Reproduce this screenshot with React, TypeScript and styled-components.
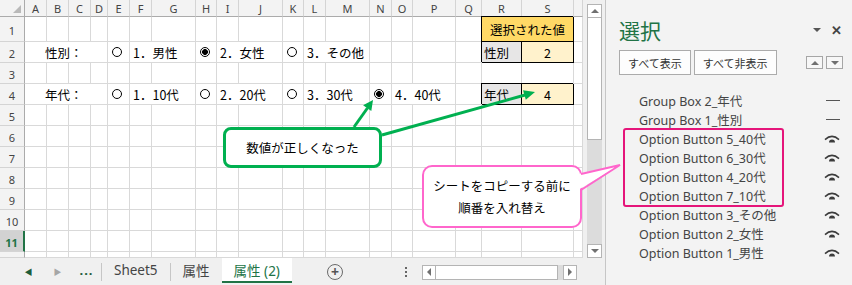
import styled, { createGlobalStyle } from 'styled-components';

const GlobalStyle = createGlobalStyle`
  html, body {
    margin: 0;
    padding: 0;
  }
  body {
    background: #fff;
    font-family: "Noto Sans", "Noto Sans CJK JP", sans-serif;
  }
`;

const JP = `"Noto Sans CJK JP", "Noto Sans", sans-serif`;
const UI = `"Noto Sans", "Noto Sans CJK JP", sans-serif`;
const GREEN = '#217346';
const GRID = '#d9d9d9';

// column widths A..S, T is the partial column left over
const COL_WIDTHS = [22, 22, 22, 17, 22, 22, 44, 21, 22, 44, 21, 22, 44, 22, 21, 43, 26, 40, 52];
const LETTERS = 'ABCDEFGHIJKLMNOPQRS'.split('');

type Seg = {
  col: number;
  span?: number;
  kind: 'label' | 'radio' | 'option' | 'title' | 'key' | 'val';
  text?: string;
  on?: boolean;
};

const SHEET: Seg[][] = [
  [{ col: 17, span: 2, kind: 'title', text: '選択された値' }],
  [
    { col: 0, span: 4, kind: 'label', text: '性別：' },
    { col: 4, kind: 'radio' },
    { col: 5, span: 2, kind: 'option', text: '1．男性' },
    { col: 7, kind: 'radio', on: true },
    { col: 8, span: 2, kind: 'option', text: '2．女性' },
    { col: 10, kind: 'radio' },
    { col: 11, span: 2, kind: 'option', text: '3．その他' },
    { col: 17, kind: 'key', text: '性別' },
    { col: 18, kind: 'val', text: '2' },
  ],
  [],
  [
    { col: 0, span: 4, kind: 'label', text: '年代：' },
    { col: 4, kind: 'radio' },
    { col: 5, span: 2, kind: 'option', text: '1．10代' },
    { col: 7, kind: 'radio' },
    { col: 8, span: 2, kind: 'option', text: '2．20代' },
    { col: 10, kind: 'radio' },
    { col: 11, span: 2, kind: 'option', text: '3．30代' },
    { col: 13, kind: 'radio', on: true },
    { col: 14, span: 2, kind: 'option', text: '4．40代' },
    { col: 17, kind: 'key', text: '年代' },
    { col: 18, kind: 'val', text: '4' },
  ],
  [],
  [],
  [],
  [],
  [],
  [],
  [],
  [],
];

const ITEMS = [
  { name: 'Group Box 2_年代', group: true },
  { name: 'Group Box 1_性別', group: true },
  { name: 'Option Button 5_40代' },
  { name: 'Option Button 6_30代' },
  { name: 'Option Button 4_20代' },
  { name: 'Option Button 7_10代' },
  { name: 'Option Button 3_その他' },
  { name: 'Option Button 2_女性' },
  { name: 'Option Button 1_男性' },
];

const Screen = styled.div`
  position: relative;
  width: 852px;
  height: 285px;
  display: flex;
  overflow: hidden;
  background: #f0f0f0;
`;

const SheetSide = styled.div`
  width: 605px;
  display: flex;
  flex-direction: column;
`;

const SheetTop = styled.div`
  height: 258px;
  display: flex;
`;

const Grid = styled.div`
  width: 583px;
  height: 258px;
  overflow: hidden;
  display: grid;
  grid-template-columns: 25px ${COL_WIDTHS.map((w) => `${w}px`).join(' ')} 1fr;
  grid-template-rows: 17px 25px repeat(10, 21px) 1fr;
  background: #fff;
`;

const Corner = styled.div`
  box-sizing: border-box;
  background: #f3f3f3;
  border-right: 1px solid #ababab;
  border-bottom: 1px solid #ababab;
  display: flex;
  justify-content: flex-end;
  align-items: flex-end;
  padding: 0 3px 3px 0;
  &::after {
    content: '';
    border-style: solid;
    border-width: 0 0 8px 8px;
    border-color: transparent transparent #b9b9b9 transparent;
  }
`;

const ColHead = styled.div`
  box-sizing: border-box;
  background: #f3f3f3;
  border-right: 1px solid #d4d4d4;
  border-bottom: 1px solid #ababab;
  display: flex;
  align-items: center;
  justify-content: center;
  font-family: ${UI};
  font-size: 11px;
  color: #444;
`;

const RowHead = styled.div<{ $active?: boolean }>`
  box-sizing: border-box;
  background: ${(p) => (p.$active ? '#d2d2d2' : '#f3f3f3')};
  border-right: ${(p) => (p.$active ? `2px solid ${GREEN}` : '1px solid #ababab')};
  border-bottom: 1px solid #d4d4d4;
  display: flex;
  align-items: center;
  justify-content: center;
  font-family: ${UI};
  font-size: 11px;
  font-weight: ${(p) => (p.$active ? 700 : 400)};
  color: ${(p) => (p.$active ? GREEN : '#444')};
  padding-top: 2px;
`;

const Cell = styled.div<{
  $span?: number;
  $fill?: string;
  $boxed?: boolean;
  $center?: boolean;
  $pad?: number;
}>`
  grid-column: span ${(p) => p.$span || 1};
  box-sizing: border-box;
  min-width: 0;
  border-right: 1px solid ${(p) => (p.$boxed ? '#000' : GRID)};
  border-bottom: 1px solid ${(p) => (p.$boxed ? '#000' : GRID)};
  background: ${(p) => p.$fill || '#fff'};
  display: flex;
  align-items: center;
  justify-content: ${(p) => (p.$center ? 'center' : 'flex-start')};
  padding-left: ${(p) => p.$pad ?? 0}px;
  font-family: ${JP};
  font-size: 12.5px;
  color: #000;
  white-space: nowrap;
  ${(p) => p.$boxed && 'position: relative; z-index: 1; box-shadow: -1px -1px 0 #000;'}
`;

const Radio = styled.span<{ $on?: boolean }>`
  box-sizing: border-box;
  width: 10px;
  height: 10px;
  margin-left: 4px;
  border: 1px solid #000;
  border-radius: 50%;
  background: ${(p) =>
    p.$on ? 'radial-gradient(circle, #000 0 2.6px, #fff 3.2px)' : '#fff'};
`;

const VScroll = styled.div`
  width: 22px;
  box-sizing: border-box;
  padding: 4px 3px 0 4px;
  background: #f0f0f0;
  display: flex;
`;

const ScrollFrame = styled.div<{ $dir: 'v' | 'h' }>`
  flex: 1;
  display: flex;
  flex-direction: ${(p) => (p.$dir === 'v' ? 'column' : 'row')};
  background: #dcdcdc;
`;

const ArrowBtn = styled.div<{ $dir: 'up' | 'down' | 'left' | 'right' }>`
  box-sizing: border-box;
  flex: 0 0 14px;
  border: 1px solid #b4b4b4;
  background: #fff;
  display: flex;
  align-items: center;
  justify-content: center;
  &::after {
    content: '';
    border-style: solid;
    ${(p) =>
      p.$dir === 'up'
        ? 'border-width: 0 4px 4px 4px; border-color: transparent transparent #707070 transparent;'
        : p.$dir === 'down'
        ? 'border-width: 4px 4px 0 4px; border-color: #707070 transparent transparent transparent;'
        : p.$dir === 'left'
        ? 'border-width: 4px 4px 4px 0; border-color: transparent #707070 transparent transparent;'
        : 'border-width: 4px 0 4px 4px; border-color: transparent transparent transparent #707070;'}
  }
`;

const Thumb = styled.div<{ $size: number; $dir: 'v' | 'h' }>`
  box-sizing: border-box;
  flex: 0 0 ${(p) => p.$size}px;
  background: #fff;
  border: 1px solid #b4b4b4;
  ${(p) => (p.$dir === 'v' ? 'border-top: none;' : 'border-left: none;')}
`;

const TabBar = styled.div`
  flex: 1;
  display: flex;
  align-items: stretch;
  background: #f0f0f0;
  font-family: ${UI};
  padding-right: 22px;
`;

const NavBtns = styled.div`
  display: flex;
  align-items: center;
  padding-left: 14px;
`;

const NavBtn = styled.div<{ $tone: 'dark' | 'light' }>`
  width: 29px;
  display: flex;
  justify-content: center;
  align-items: center;
  color: ${(p) => (p.$tone === 'dark' ? '#1e5c3a' : '#a6a6a6')};
  font-size: 8px;
`;

const More = styled.div`
  width: 29px;
  text-align: center;
  color: #1e5c3a;
  font-size: 13px;
  font-weight: 700;
  letter-spacing: 1px;
  margin-top: -4px;
`;

const Sep = styled.div`
  width: 1px;
  height: 18px;
  align-self: center;
  background: #c6c6c6;
`;

const Tab = styled.div<{ $active?: boolean }>`
  display: flex;
  align-items: center;
  padding: 0 12px;
  font-size: 13.5px;
  color: ${(p) => (p.$active ? GREEN : '#444')};
  background: ${(p) => (p.$active ? '#fff' : 'transparent')};
  border-bottom: 2px solid ${(p) => (p.$active ? GREEN : 'transparent')};
  margin-bottom: 2px;
`;

const AddSheet = styled.div`
  box-sizing: border-box;
  width: 16px;
  height: 16px;
  align-self: center;
  margin-left: 35px;
  border: 1.5px solid #6a6a6a;
  border-radius: 50%;
  display: flex;
  align-items: center;
  justify-content: center;
  color: #555;
  font-size: 14px;
  font-weight: 700;
  line-height: 1;
`;

const Dots = styled.div`
  align-self: center;
  margin-left: 62px;
  display: flex;
  flex-direction: column;
  gap: 2px;
  span {
    width: 2px;
    height: 2px;
    background: #666;
  }
`;

const HScroll = styled.div`
  width: 155px;
  height: 15px;
  align-self: center;
  margin-left: 15px;
  margin-top: 1px;
  display: flex;
`;

const Panel = styled.aside`
  flex: 1;
  border-left: 1px solid #c6c6c6;
  background: #f3f3f3;
  padding: 16px 9px 0 13px;
  display: flex;
  flex-direction: column;
  font-family: ${UI};
`;

const PanelHead = styled.div`
  display: flex;
  align-items: center;
  justify-content: space-between;
`;

const PanelTitle = styled.h1`
  margin: 0;
  font-family: ${JP};
  font-size: 21px;
  line-height: 28px;
  font-weight: 400;
  color: ${GREEN};
`;

const HeadTools = styled.div`
  display: flex;
  align-items: center;
  gap: 10px;
  padding-right: 1px;
  color: #444;
`;

const Caret = styled.span`
  border-style: solid;
  border-width: 4px 4px 0 4px;
  border-color: #555 transparent transparent transparent;
`;

const Close = styled.span`
  font-size: 13px;
  font-weight: 700;
  line-height: 1;
`;

const ButtonRow = styled.div`
  display: flex;
  align-items: center;
  gap: 3px;
  margin-top: 6px;
`;

const PaneButton = styled.button`
  height: 25px;
  padding: 0 8px;
  border: 1px solid #ababab;
  background: #fdfdfd;
  font-family: ${JP};
  font-size: 11px;
  color: #333;
`;

const OrderBtns = styled.div`
  margin-left: auto;
  display: flex;
  gap: 3px;
`;

const OrderBtn = styled(ArrowBtn)`
  flex: none;
  width: 17px;
  height: 13px;
  border: 1.5px solid #a6a6a6;
  background: #f7f7f7;
`;

const List = styled.ul`
  list-style: none;
  margin: 16px 0 0;
  padding: 0;
`;

const Item = styled.li`
  height: 19px;
  display: flex;
  align-items: center;
  justify-content: space-between;
  padding: 0 3px 0 20px;
  font-size: 12.5px;
  color: #444;
`;

const Dash = styled.span`
  width: 14px;
  height: 1px;
  background: #555;
`;

const Overlay = styled.svg`
  position: absolute;
  left: 0;
  top: 0;
  width: 852px;
  height: 285px;
  pointer-events: none;
  z-index: 3;
`;

const Callout = styled.div<{ $tone: 'green' | 'pink' }>`
  position: absolute;
  z-index: 4;
  box-sizing: border-box;
  background: #fff;
  border: ${(p) => (p.$tone === 'green' ? '3px solid #00b050' : '2px solid #ff66cc')};
  border-radius: ${(p) => (p.$tone === 'green' ? 8 : 10)}px;
  display: flex;
  flex-direction: column;
  align-items: center;
  justify-content: center;
  font-family: ${JP};
  font-size: 12.5px;
  line-height: 22px;
  color: #000;
`;

const Frame = styled.div`
  position: absolute;
  z-index: 4;
  left: 623px;
  top: 128px;
  width: 161px;
  height: 79px;
  box-sizing: border-box;
  border: 2px solid #e5157a;
  border-radius: 3px;
`;

function Eye() {
  return (
    <svg width="16" height="10" viewBox="0 0 16 10">
      <path d="M1 5.6 Q8 -0.8 15 5.6" fill="none" stroke="#3c3c3c" strokeWidth="1.5" />
      <path d="M5 8.6 A3 3 0 0 1 11 8.6 Z" fill="#3c3c3c" />
    </svg>
  );
}

function SegCell({ seg }: { seg: Seg }) {
  switch (seg.kind) {
    case 'label':
      return (
        <Cell $span={seg.span} $pad={20}>
          {seg.text}
        </Cell>
      );
    case 'radio':
      return (
        <Cell>
          <Radio $on={seg.on} />
        </Cell>
      );
    case 'option':
      return (
        <Cell $span={seg.span} $pad={3}>
          {seg.text}
        </Cell>
      );
    case 'title':
      return (
        <Cell $span={seg.span} $boxed $fill="#ffd966" $center>
          {seg.text}
        </Cell>
      );
    case 'key':
      return (
        <Cell $boxed $fill="#e7e6e6" $pad={2}>
          {seg.text}
        </Cell>
      );
    default:
      return (
        <Cell $boxed $fill="#fff2cc" $center>
          {seg.text}
        </Cell>
      );
  }
}

function SheetRow({ segs, row }: { segs: Seg[]; row: number }) {
  const cells = [];
  let c = 0;
  while (c < 20) {
    const seg = segs.find((s) => s.col === c);
    if (seg) {
      cells.push(<SegCell key={c} seg={seg} />);
      c += seg.span ?? 1;
    } else {
      cells.push(<Cell key={c} />);
      c += 1;
    }
  }
  return (
    <>
      <RowHead $active={row === 11}>{row <= 11 ? row : ''}</RowHead>
      {cells}
    </>
  );
}

export default function App() {
  return (
    <Screen>
      <GlobalStyle />
      <SheetSide>
        <SheetTop>
          <Grid>
            <Corner />
            {LETTERS.map((l) => (
              <ColHead key={l}>{l}</ColHead>
            ))}
            <ColHead />
            {SHEET.map((segs, i) => (
              <SheetRow key={i} segs={segs} row={i + 1} />
            ))}
          </Grid>
          <VScroll>
            <ScrollFrame $dir="v">
              <ArrowBtn $dir="up" />
              <Thumb $dir="v" $size={122} />
              <div style={{ flex: 1 }} />
              <ArrowBtn $dir="down" />
            </ScrollFrame>
          </VScroll>
        </SheetTop>
        <TabBar>
          <NavBtns>
            <NavBtn $tone="dark">◀</NavBtn>
            <NavBtn $tone="light">▶</NavBtn>
            <More>...</More>
          </NavBtns>
          <Sep />
          <Tab>Sheet5</Tab>
          <Sep />
          <Tab>属性</Tab>
          <Tab $active>属性 (2)</Tab>
          <AddSheet>+</AddSheet>
          <Dots>
            <span />
            <span />
            <span />
          </Dots>
          <HScroll>
            <ScrollFrame $dir="h">
              <ArrowBtn $dir="left" />
              <Thumb $dir="h" $size={122} />
              <div style={{ flex: 1 }} />
              <ArrowBtn $dir="right" />
            </ScrollFrame>
          </HScroll>
        </TabBar>
      </SheetSide>

      <Panel>
        <PanelHead>
          <PanelTitle>選択</PanelTitle>
          <HeadTools>
            <Caret />
            <Close>✕</Close>
          </HeadTools>
        </PanelHead>
        <ButtonRow>
          <PaneButton>すべて表示</PaneButton>
          <PaneButton>すべて非表示</PaneButton>
          <OrderBtns>
            <OrderBtn $dir="up" />
            <OrderBtn $dir="down" />
          </OrderBtns>
        </ButtonRow>
        <List>
          {ITEMS.map((it) => (
            <Item key={it.name}>
              <span>{it.name}</span>
              {it.group ? <Dash /> : <Eye />}
            </Item>
          ))}
        </List>
      </Panel>

      {/* annotations drawn over the sheet */}
      <Overlay viewBox="0 0 852 285">
        <line x1="354" y1="127" x2="367.5" y2="108" stroke="#00b050" strokeWidth="3" />
        <polygon points="373,100 371.3,111.1 363.1,105.3" fill="#00b050" />
        <line x1="382" y1="135" x2="525" y2="95" stroke="#00b050" strokeWidth="3" />
        <polygon points="535,92 525.8,99.8 523,90.2" fill="#00b050" />
      </Overlay>
      <Callout $tone="green" style={{ left: 223, top: 127, width: 159, height: 41 }}>
        数値が正しくなった
      </Callout>
      <Callout $tone="pink" style={{ left: 422, top: 165, width: 160, height: 63 }}>
        <span>シートをコピーする前に</span>
        <span>順番を入れ替え</span>
      </Callout>
      <Overlay viewBox="0 0 852 285" style={{ zIndex: 5 }}>
        <polygon points="578,174 620,165 578,190" fill="#fff" />
        <polyline points="581,174 620,165 581,190" fill="none" stroke="#ff66cc" strokeWidth="2" />
      </Overlay>
      <Frame />
    </Screen>
  );
}
